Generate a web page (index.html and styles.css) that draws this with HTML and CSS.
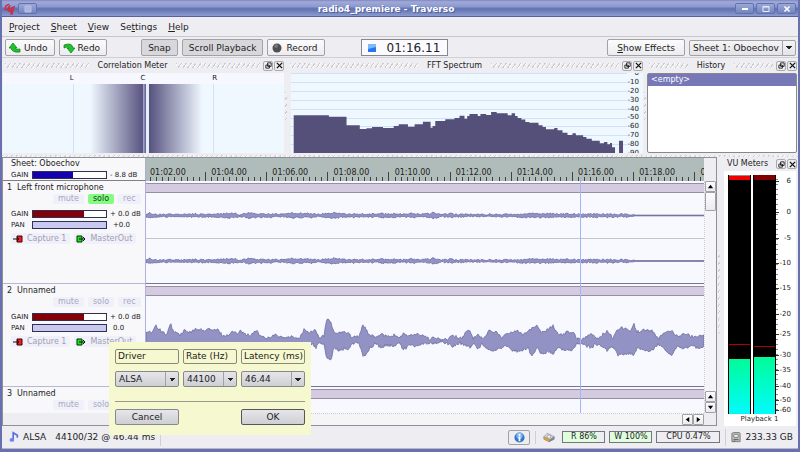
FILE: index.html
```html
<!DOCTYPE html>
<html lang="en">
<head>
<meta charset="UTF-8">
<meta name="viewport" content="width=device-width, initial-scale=1.0">
<title>radio4_premiere - Traverso</title>
<link rel="stylesheet" href="styles.css">
</head>
<body>

<header class="titlebar">
    <svg class="app-icon" viewBox="0 0 12 12"><path d="M5 1 2 3 1 6l2 1 2-3 1-2M5 6l5-2-2 7-1 0 1-4-3 1z" fill="none" stroke="#c8304c" stroke-width="1.500"/></svg>
    <button class="win-btn" aria-label="Window menu"><svg viewBox="0 0 8 8"><path d="M1 1h6v6h-6z" fill="#aab6de" stroke="#b8c2e4"/></svg></button>
    <h1>radio4_premiere - Traverso</h1>
    <button class="win-btn" aria-label="Minimize"><svg viewBox="0 0 8 8"><path d="M1 4h6" stroke="#fff" stroke-width="2"/></svg></button>
    <button class="win-btn" aria-label="Maximize"><svg viewBox="0 0 8 8"><path d="M1 1.500h6v5h-6zM1 2h6" fill="none" stroke="#e8ecfa"/></svg></button>
    <button class="win-btn" aria-label="Close"><svg viewBox="0 0 8 8"><path d="M1.500 1.500 6.500 6.500M6.500 1.500 1.500 6.500" stroke="#fff" stroke-width="1.600"/></svg></button>
</header>

<nav class="menubar">
    <button><u>P</u>roject</button>
    <button><u>S</u>heet</button>
    <button><u>V</u>iew</button>
    <button>Se<u>t</u>tings</button>
    <button><u>H</u>elp</button>
</nav>

<div class="toolbar">
    <button class="btn"><svg viewBox="0 0 12 12"><path d="M4 1 0 6h2q1 5 9 4V7q-4 1-5-1h2z" fill="#1fc42c" stroke="#0b7a16" stroke-width=".7"/></svg>Undo</button>
    <button class="btn"><svg viewBox="0 0 12 12"><path d="M8 11 12 6h-2Q9 0 1 3v3q4-2 5 0H4z" fill="#1fc42c" stroke="#0b7a16" stroke-width=".7"/></svg>Redo</button>
    <button class="btn pressed group">Snap</button>
    <button class="btn pressed">Scroll Playback</button>
    <button class="btn"><svg viewBox="0 0 12 12"><circle cx="6" cy="6" r="4.500" fill="#505050"/><circle cx="5" cy="4" r="2" fill="#777"/></svg>Record</button>
    <div class="clock"><svg viewBox="0 0 10 10"><path d="M1 1h8v8H1z" fill="#2477ec"/><path d="M1 1h8v3L1 6z" fill="#7db9ff"/></svg>01:16.11</div>
    <button class="btn effects"><span><u>S</u>how Effects</span></button>
    <span class="combo sheet-combo"><select aria-label="Sheet"><option>Sheet 1: Oboechov</option></select></span>
</div>

<div class="docks">
    <section class="dock correlation">
        <div class="dock-title"><i></i><h2>Correlation Meter</h2><i></i>
            <button aria-label="Float"><svg viewBox="0 0 8 8"><path d="M3 1h4v4H3zM1 3.500h4V7H1z" fill="#fff" stroke="#111"/></svg></button>
            <button aria-label="Close"><svg viewBox="0 0 8 8"><path d="M1 1l6 6M7 1 1 7" stroke="#111" stroke-width="1.500"/></svg></button>
        </div>
        <div class="corr-labels"><span>L</span><span>C</span><span>R</span></div>
        <div class="corr-plot"></div>
    </section>
    <div class="splitter"></div>
    <section class="dock fft">
        <div class="dock-title"><i></i><h2>FFT Spectrum</h2><i></i>
            <button aria-label="Float"><svg viewBox="0 0 8 8"><path d="M3 1h4v4H3zM1 3.500h4V7H1z" fill="#fff" stroke="#111"/></svg></button>
            <button aria-label="Close"><svg viewBox="0 0 8 8"><path d="M1 1l6 6M7 1 1 7" stroke="#111" stroke-width="1.500"/></svg></button>
        </div>
        <div class="fft-body">
            <svg id="fft" viewBox="291 73 337 80" preserveAspectRatio="none"></svg>
            <ol class="fft-scale"><li>0</li><li>-10</li><li>-20</li><li>-30</li><li>-40</li><li>-50</li><li>-60</li><li>-70</li><li>-80</li><li>-90</li></ol>
        </div>
    </section>
    <div class="splitter"></div>
    <section class="dock history">
        <div class="dock-title"><i></i><h2>History</h2><i></i>
            <button aria-label="Float"><svg viewBox="0 0 8 8"><path d="M3 1h4v4H3zM1 3.500h4V7H1z" fill="#fff" stroke="#111"/></svg></button>
            <button aria-label="Close"><svg viewBox="0 0 8 8"><path d="M1 1l6 6M7 1 1 7" stroke="#111" stroke-width="1.500"/></svg></button>
        </div>
        <ul class="history-list"><li>&lt;empty&gt;</li></ul>
    </section>
</div>

<main class="workspace">
    <section class="sheet">
        <div class="sheet-head">
            <h2>Sheet: Oboechov</h2>
            <div class="level"><label for="g0">GAIN</label><input type="range" id="g0" class="master" value="55" style="--level: 55%"><output>- 8.8 dB</output></div>
        </div>
        <div class="ruler">
            <svg id="ticks" viewBox="146 0 558 23" preserveAspectRatio="none"></svg>
            <div class="times"><span>01:02.00</span><span>01:04.00</span><span>01:06.00</span><span>01:08.00</span><span>01:10.00</span><span>01:12.00</span><span>01:14.00</span><span>01:16.00</span><span>01:18.00</span><span>01:20.00</span></div>
        </div>
        <div class="corner"></div>

        <div class="track-panels">
            <article class="track-panel">
                <h3><span>1</span>Left front microphone</h3>
                <div class="switches"><button>mute</button><button class="on">solo</button><button>rec</button></div>
                <div class="level"><label for="g1">GAIN</label><input type="range" id="g1" class="gain" value="70" style="--level: 70%"><output>+ 0.0 dB</output></div>
                <div class="level"><label for="p1">PAN</label><input type="range" id="p1" class="pan" style="--level: 100%"><output class="pan-value">+0.0</output></div>
                <div class="buses">
                    <button><svg viewBox="0 0 10 8"><path d="M4 1h5v6H4z" fill="#f02020" stroke="#400"/><path d="M0 4h6M4 2l2 2-2 2" fill="none" stroke="#111"/></svg>Capture 1</button>
                    <button><svg viewBox="0 0 10 8"><path d="M1 1h5v6H1z" fill="#18e818" stroke="#030"/><path d="M3 4h6M7 2l2 2-2 2" fill="none" stroke="#111"/></svg>MasterOut</button>
                </div>
            </article>
            <article class="track-panel">
                <h3><span>2</span>Unnamed</h3>
                <div class="switches"><button>mute</button><button>solo</button><button>rec</button></div>
                <div class="level"><label for="g2">GAIN</label><input type="range" id="g2" class="gain" value="70" style="--level: 70%"><output>+ 0.0 dB</output></div>
                <div class="level"><label for="p2">PAN</label><input type="range" id="p2" class="pan" style="--level: 100%"><output class="pan-value">0.0</output></div>
                <div class="buses">
                    <button><svg viewBox="0 0 10 8"><path d="M4 1h5v6H4z" fill="#f02020" stroke="#400"/><path d="M0 4h6M4 2l2 2-2 2" fill="none" stroke="#111"/></svg>Capture 1</button>
                    <button><svg viewBox="0 0 10 8"><path d="M1 1h5v6H1z" fill="#18e818" stroke="#030"/><path d="M3 4h6M7 2l2 2-2 2" fill="none" stroke="#111"/></svg>MasterOut</button>
                </div>
            </article>
            <article class="track-panel">
                <h3><span>3</span>Unnamed</h3>
                <div class="switches"><button>mute</button><button>solo</button><button>rec</button></div>
            </article>
        </div>
        <div class="clips">
            <div class="clip">
                <div class="clip-bar"></div>
                <svg id="wave1" viewBox="146 193 558 90" preserveAspectRatio="none"></svg>
            </div>
            <div class="clip">
                <div class="clip-bar"></div>
                <svg id="wave2" viewBox="146 296 558 90" preserveAspectRatio="none"></svg>
            </div>
            <div class="clip"><div class="clip-bar"></div></div>
            <div class="playhead"></div>
        </div>
        <div class="vscroll">
            <button aria-label="Scroll up"><svg viewBox="0 0 8 8"><path d="M1 6 4 2l3 4z"/></svg></button>
            <div class="thumb"></div>
            <button class="end" aria-label="Page up"><svg viewBox="0 0 8 8"><path d="M1 6 4 2l3 4z"/></svg></button>
            <button aria-label="Scroll down"><svg viewBox="0 0 8 8"><path d="M1 2 4 6l3-4z"/></svg></button>
        </div>
        <div class="corner"></div>
        <div class="hscroll">
            <button aria-label="Scroll left"><svg viewBox="0 0 8 8"><path d="M6 1 2 4l4 3z"/></svg></button>
            <button aria-label="Scroll right"><svg viewBox="0 0 8 8"><path d="M2 1 6 4 2 7z"/></svg></button>
        </div>
        <div class="corner"></div>
    </section>
    <div class="splitter"></div>
    <section class="dock vu">
        <div class="dock-title"><h2>VU Meters</h2>
            <button aria-label="Float"><svg viewBox="0 0 8 8"><path d="M3 1h4v4H3zM1 3.500h4V7H1z" fill="#fff" stroke="#111"/></svg></button>
            <button aria-label="Close"><svg viewBox="0 0 8 8"><path d="M1 1l6 6M7 1 1 7" stroke="#111" stroke-width="1.500"/></svg></button>
        </div>
        <div class="vu-body">
            <div class="bars">
                <div class="bar over" style="--level: 23%; --peak: 29%"></div>
                <div class="bar" style="--level: 24%; --peak: 28%"></div>
                <ol class="vu-scale">
                    <li style="flex-grow: 31">6</li><li style="flex-grow: 26">0</li><li style="flex-grow: 25">-5</li><li style="flex-grow: 25">-10</li><li style="flex-grow: 25">-15</li><li style="flex-grow: 20">-20</li><li style="flex-grow: 21">-25</li><li style="flex-grow: 15">-30</li><li style="flex-grow: 16">-35</li><li style="flex-grow: 14">-40</li><li style="flex-grow: 10">-50</li><li style="flex-grow: 4">-60</li>
                </ol>
            </div>
            <p>Playback 1</p>
        </div>
    </section>
</main>

<footer class="statusbar">
    <svg class="note" viewBox="0 0 12 14"><path d="M5 10V2l5 3v3" fill="none" stroke="#5a6ee0" stroke-width="2"/><ellipse cx="3.500" cy="10.500" rx="2.800" ry="2.200" fill="#6f82f0"/></svg>
    <span class="driver">ALSA</span>
    <span class="rate">44100/32 @ 46.44 ms</span>
    <button class="info" aria-label="Information"><svg viewBox="0 0 12 12"><circle cx="6" cy="6" r="5.500" fill="#2d74c8"/><circle cx="6" cy="4" r="3.500" fill="#82b4ec"/><path d="M6 2v2M6 5v5" stroke="#fff" stroke-width="2"/></svg></button>
    <svg class="cube" viewBox="0 0 14 14"><path d="M1 6 5 2l8 4-5 4z" fill="#d4d4dc" stroke="#a4a4ac"/><path d="M1 6v3l6 3 1-2z" fill="#e0a848" stroke="#b89050"/><path d="M8 10l5-4v3l-6 3z" fill="#7c8088" stroke="#888"/><circle cx="7" cy="6" r="2" fill="#fafafa" stroke="#99a"/></svg>
    <span class="stat" style="--fill: 86%">R 86%</span>
    <span class="stat" style="--fill: 100%">W 100%</span>
    <span class="stat cpu" style="--fill: 0%">CPU 0.47%</span>
    <span class="disk"><svg viewBox="0 0 12 14"><path d="M1 2 3 1h7l1 1v10H1z" fill="#b8b8b8" stroke="#777"/><ellipse cx="6" cy="5" rx="3" ry="2" fill="#eee" stroke="#777"/><path d="M3 9.500h6M3 11.500h2" stroke="#555"/></svg>233.33 GB</span>
</footer>

<form class="driver-popup">
    <label for="driver">Driver</label>
    <label for="rate">Rate (Hz)</label>
    <label for="latency">Latency (ms)</label>
    <span class="combo"><select id="driver"><option>ALSA</option></select></span>
    <span class="combo"><select id="rate"><option>44100</option></select></span>
    <span class="combo"><select id="latency"><option>46.44</option></select></span>
    <hr>
    <button type="button" class="btn cancel">Cancel</button>
    <button type="button" class="btn ok">OK</button>
</form>

<script src="script.js"></script>
</body>
</html>
```
FILE: styles.css
```css
* {
    box-sizing: border-box;
}

body {
    display: flex;
    flex-direction: column;
    min-height: 100vh;
    margin: 0;
    border: 2px solid #6870b0;
    border-top: 0;
    border-bottom-width: 3px;
    background: #eeeef2;
    color: #222;
    font: 9px/12px "DejaVu Sans", sans-serif;
    position: relative;
}

h1, h2, h3, p, ul, ol {
    margin: 0;
    padding: 0;
    list-style: none;
    font-size: 8px;
    font-weight: normal;
}

button, select {
    margin: 0;
    padding: 0;
    border: 0;
    background: none;
    color: inherit;
    font: inherit;
}

svg {
    display: block;
}

/* title bar */
.titlebar {
    display: flex;
    align-items: center;
    gap: 2px;
    height: 17px;
    margin: 0 -2px;
    padding: 1px 4px 0;
    border-bottom: 1px solid #5a5f9e;
    background: linear-gradient(#8088c0, #a0aad8 12%, #8c9ad0 40%, #6272b0 55%, #7080bc 72%, #8c9cd0);
}

.titlebar h1 {
    flex: 1;
    color: #fff;
    font-size: 9px;
    font-weight: bold;
    text-align: center;
    text-shadow: 1px 1px #5060a0;
}

.app-icon {
    width: 12px;
    height: 12px;
}

.win-btn {
    display: grid;
    place-items: center;
    width: 19px;
    height: 11px;
    border: 1px solid #6272ae;
    border-radius: 2px;
    background: linear-gradient(#9aa8d8, #7484c0);
}

.win-btn svg {
    width: 8px;
    height: 8px;
}

/* menu and toolbar */
.menubar {
    display: flex;
    gap: 11px;
    height: 20px;
    padding: 0 7px;
    border-bottom: 1px solid #c8c8cc;
}

.toolbar {
    display: flex;
    align-items: center;
    gap: 4px;
    height: 21px;
    padding: 2px 2px 1px 3px;
    border-bottom: 1px solid #d0d0d4;
}

.btn {
    display: flex;
    align-items: center;
    justify-content: center;
    gap: 3px;
    height: 17px;
    padding: 0 6px;
    border: 1px solid #a2a2a6;
    border-radius: 2px;
    background: linear-gradient(#fcfcfc, #ececf0);
}

.btn svg {
    width: 12px;
    height: 12px;
    margin-left: -3px;
}

.pressed {
    background: #d8d8dc;
}

.group {
    margin-left: 30px;
}

.clock {
    display: flex;
    align-items: center;
    gap: 10px;
    height: 17px;
    margin-left: 32px;
    padding: 0 7px 0 5px;
    border: 1px solid #88888c;
    background: #fbfbff;
    font-size: 12px;
}

.clock svg {
    width: 10px;
    height: 10px;
}

.effects {
    margin-left: auto;
    padding: 0 9px;
}

.combo {
    display: flex;
    height: 16px;
    border: 1px solid #a2a2a6;
    border-radius: 2px;
    background: linear-gradient(#f4f4f6, #e4e4e8);
    position: relative;
}

.combo select {
    flex: 1;
    min-width: 0;
    padding: 0 12px 0 3px;
    appearance: none;
}

.combo::after {
    content: "";
    width: 12px;
    border-left: 1px solid #a2a2a6;
    background: conic-gradient(from -45deg at 50% 100%, #222 90deg, transparent 0) center / 6px 3px no-repeat;
    position: absolute;
    top: 0;
    right: 0;
    bottom: 0;
    pointer-events: none;
}

.sheet-combo {
    width: 107px;
}

/* docks */
.docks {
    display: flex;
    height: 99px;
    padding: 0 1px 4px 1px;
    background: repeating-linear-gradient(125deg, #d0d0d4 0 1px, #f8f8fa 1px 2px, #eeeef2 2px 4px) 50% 97px / 100% 2px no-repeat;
}

.dock {
    display: flex;
    flex-direction: column;
    min-width: 0;
}

.correlation {
    flex: 281;
}

.fft {
    flex: 355;
}

.history {
    flex: 150;
}

.dock-title {
    display: flex;
    align-items: center;
    gap: 1px;
    height: 15px;
}

.dock-title i {
    flex: 1;
    height: 5px;
    margin: 0 2px;
    background: repeating-linear-gradient(125deg, #ccccd0 0 1px, #f8f8fa 1px 2px, transparent 2px 4px);
}

.dock-title h2 {
    margin: 0 6px;
}

.dock-title button {
    display: grid;
    place-items: center;
    width: 10px;
    height: 10px;
    border: 1px solid #aaaaae;
    border-radius: 2px;
}

.dock-title svg {
    width: 7px;
    height: 7px;
}

.splitter {
    flex: 0 0 4px;
    background: repeating-linear-gradient(125deg, #ccccd0 0 1px, #f8f8fa 1px 2px, #eeeef2 2px 4px) center / 2px 28px no-repeat;
}

.workspace .splitter {
    background-size: 2px 84px;
}

.corr-labels {
    display: flex;
    justify-content: space-evenly;
    height: 11px;
    background: #f7f7ff;
    font-size: 7px;
    line-height: 10px;
}

.corr-plot {
    flex: 1;
    background:
        linear-gradient(#cfe2fa, #cfe2fa) 25% 0 / 1px 100% no-repeat,
        linear-gradient(#cfe2fa, #cfe2fa) 75% 0 / 1px 100% no-repeat,
        linear-gradient(90deg, transparent 31%, #56527f 50%, #a0a0cc 50%, #56527f 51%, #e4f0fc 51%, #e4f0fc 52%, #56527f 52%, transparent 71%),
        #f0f8ff;
}

.fft-body {
    display: flex;
    flex: 1;
    min-height: 0;
    padding-left: 3px;
    overflow: hidden;
}

.fft-body svg {
    flex: 1;
    min-width: 0;
    height: 100%;
    background: #f0f8ff;
}

.fft-scale {
    display: flex;
    flex-direction: column;
    justify-content: space-between;
    width: 16px;
    margin: -4px 0;
    padding-right: 4px;
    background: #f0f8ff;
    font-size: 7px;
    line-height: 8px;
}

.fft-scale li {
    display: flex;
    justify-content: flex-end;
}

.history-list {
    flex: 1;
    border: 1px solid #88888c;
    border-radius: 2px;
    background: #fff;
}

.history-list li {
    padding-left: 3px;
    background: #7678b8;
    color: #fff;
    line-height: 12px;
}

/* sheet */
.workspace {
    display: flex;
    flex: 1;
}

.sheet {
    display: grid;
    grid-template-columns: 143px 1fr 12px;
    grid-template-rows: 23px 1fr 12px;
    flex: 1;
    min-width: 0;
    border: 1px solid #909094;
    background: #f8f8fa;
}

.sheet-head {
    border-right: 1px solid #a8aed0;
    border-bottom: 1px solid #808084;
    padding-left: 8px;
}

.sheet-head h2 {
    line-height: 11px;
}

.level {
    display: grid;
    grid-template-columns: 18px 75px 1fr;
    align-items: center;
    gap: 3px;
    height: 11px;
    font-size: 7px;
    line-height: 8px;
    white-space: nowrap;
}

.level input {
    width: 75px;
    height: 8px;
    margin: 0;
    appearance: none;
    border: 1px solid #303050;
    background: linear-gradient(var(--fill), var(--fill)) 0 0 / var(--level) 100% no-repeat #fff;
}

.level input::-webkit-slider-thumb {
    appearance: none;
    width: 1px;
    height: 6px;
}

.level .master {
    --fill: #1400ac;
}

.level .gain {
    --fill: #840008;
}

.level .pan {
    --fill: #c8c8f0;
}

.level .pan-value {
    padding-left: 3px;
}

.ruler {
    display: grid;
    background: #b0bcb9;
    overflow: hidden;
}

.ruler svg,
.times {
    grid-area: 1 / 1;
    width: 100%;
    height: 23px;
}

.times {
    display: flex;
    min-width: 0;
    padding-top: 9px;
    font-size: 8px;
}

.times span {
    flex: 0 0 10.96%;
    padding-left: 4px;
}

.track-panels,
.clips {
    height: 0;
    min-height: 100%;
    overflow: hidden;
}

.track-panels {
    border-right: 1px solid #b0b0dc;
}

.track-panel {
    height: 103px;
    padding-left: 8px;
    border-bottom: 1px solid #b8b8d4;
}

.track-panel h3 {
    margin-left: -4px;
    line-height: 13px;
}

.track-panel h3 span {
    display: inline-block;
    width: 10px;
}

.switches {
    display: flex;
    gap: 4px;
    margin: 0 6px 4px 42px;
    color: #a8a8bc;
    font-size: 8px;
    line-height: 10px;
}

.switches button {
    padding: 0 5px;
    border-radius: 2px;
    background: #f0f0fa;
}

.switches .on {
    background: #84fc84;
    color: #183c18;
}

.buses {
    display: flex;
    gap: 4px;
    margin-top: 3px;
    color: #a0a0b0;
    font-size: 8px;
    line-height: 11px;
}

.buses button {
    display: flex;
    align-items: center;
    gap: 4px;
    padding: 0 4px 0 2px;
    background: #f0f0fa;
    border-radius: 2px;
}

.buses svg {
    width: 10px;
    height: 8px;
}

.clips {
    background: #f8f8ff;
    position: relative;
}

.clip {
    height: 103px;
    padding-top: 2px;
    border-bottom: 1px solid #75759a;
}

.clip-bar {
    height: 10px;
    border: solid #96909e;
    border-width: 1px 0;
    background: #d4cbe2;
}

.clip svg {
    width: 100%;
    height: 90px;
}

.playhead {
    width: 1px;
    background: #a4b4fc;
    position: absolute;
    top: 0;
    bottom: 0;
    left: 77.8%;
}

.vscroll,
.hscroll {
    display: flex;
    background: #f5f5f7;
}

.vscroll {
    flex-direction: column;
    border-left: 1px dotted #d0d0d4;
}

.hscroll {
    justify-content: flex-end;
    border-top: 1px dotted #d0d0d4;
}

.vscroll button,
.hscroll button,
.thumb {
    display: grid;
    place-items: center;
    width: 11px;
    height: 11px;
    border: 1px solid #a2a2a6;
    border-radius: 1px;
    background: linear-gradient(#fcfcfc, #ececf0);
}

.thumb {
    height: 19px;
}

.vscroll .end {
    margin-top: auto;
}

.vscroll svg,
.hscroll svg {
    width: 7px;
    height: 7px;
}

.corner {
    background: #eeeef2;
}

/* vu meters */
.vu {
    flex: 0 0 77px;
}

.vu .dock-title {
    height: 14px;
    padding-right: 1px;
}

.vu h2 {
    flex: 1;
    white-space: nowrap;
}

.vu-body {
    display: flex;
    flex-direction: column;
    flex: 1;
    margin: 0 2px 0 3px;
    padding: 4px 5px 1px 4px;
    background: #fff;
}

.vu-body p {
    font-size: 7px;
    line-height: 11px;
    text-align: center;
}

.bars {
    display: flex;
    flex: 1;
    gap: 2px;
}

.bar {
    width: 23px;
    border: solid #000;
    border-width: 0 1px;
    background:
        linear-gradient(#800000, #800000) 0 0 / 100% 5px no-repeat,
        linear-gradient(to top, transparent var(--peak), #b00000 0, #b00000 calc(var(--peak) + 1px), transparent 0),
        linear-gradient(#00fc98, #00fcfc) 0 100% / 100% var(--level) no-repeat,
        #000;
}

.over {
    background:
        linear-gradient(#909090 1px, #f00000 1px) 0 0 / 100% 5px no-repeat,
        linear-gradient(to top, transparent var(--peak), #b00000 0, #b00000 calc(var(--peak) + 1px), transparent 0),
        linear-gradient(#00fc98, #00fcfc) 0 100% / 100% var(--level) no-repeat,
        #000;
}

.vu-scale {
    display: flex;
    flex-direction: column;
    flex: 1;
    margin-left: -2px;
    padding-top: 6px;
    background: repeating-linear-gradient(transparent 0 4px, #88888c 4px 5px) 0 0 / 2px 100% no-repeat;
}

.vu-scale li {
    display: flex;
    flex: 1 1 0;
    justify-content: space-between;
    font-size: 7px;
    line-height: 0;
}

.vu-scale li::before {
    content: "";
    width: 3px;
    height: 1px;
    background: #333;
}

/* status bar */
.statusbar {
    display: flex;
    align-items: center;
    height: 23px;
    padding: 0 5px 0 7px;
    border-bottom: 1px solid #b8b8c4;
}

.note {
    width: 10px;
    height: 12px;
    margin-right: 4px;
}

.rate {
    margin: 0 auto 0 9px;
    padding-right: 5px;
    border-right: 1px solid #d0d0d4;
    line-height: 17px;
}

.info {
    display: grid;
    place-items: center;
    width: 22px;
    height: 15px;
    margin-right: 5px;
    border: 1px solid #a2a2a6;
    border-radius: 2px;
}

.info svg {
    width: 11px;
    height: 11px;
}

.cube {
    width: 20px;
    height: 13px;
    margin-right: 7px;
    padding-left: 7px;
    border-left: 1px solid #d0d0d4;
}

.stat {
    width: 43px;
    margin-right: 4px;
    border: 1px solid #77777b;
    background: linear-gradient(90deg, #dffedf var(--fill), #eeeef2 var(--fill));
    font-size: 8px;
    line-height: 10px;
    text-align: center;
}

.cpu {
    width: 64px;
}

.disk {
    display: flex;
    gap: 4px;
    margin-left: 1px;
    padding-left: 5px;
    border-left: 1px solid #d0d0d4;
    line-height: 17px;
}

.disk svg {
    width: 10px;
    height: 13px;
    margin-top: 2px;
}

/* driver popup, floats above the status bar */
.driver-popup {
    display: grid;
    grid-template-columns: 64px 54px 64px;
    gap: 7px 4px;
    padding: 7px 6px 10px;
    background: #f6f8cf;
    position: absolute;
    left: 107px;
    bottom: 14px;
}

.driver-popup label {
    height: 15px;
    padding-left: 2px;
    border: 1px solid #88887c;
    border-radius: 2px;
    line-height: 13px;
    white-space: nowrap;
}

.driver-popup .combo,
.driver-popup .btn {
    border-color: #88888c;
    background: linear-gradient(#e6e6ea, #cecfd4);
}

.driver-popup hr {
    grid-column: 1 / -1;
    width: 100%;
    margin: 7px 0 0;
    border: 0;
    border-top: 1px solid #99998c;
}

.driver-popup .btn {
    height: 16px;
}

.driver-popup .ok {
    grid-column: 3;
    border-color: #55555a;
}
```
FILE: script.js
```js
// ruler ticks, one major tick every ten
var d = "";
for (var i = 0; i < 92; i++) {
    var tx = Math.round(150 + i * 6.115) + 0.5;
    d += "M" + tx + " " + (i % 10 == 9 ? 14 : 19) + "V23";
}
document.getElementById("ticks").innerHTML = '<path d="' + d + '" stroke="#3c4444"/>';

// spectrum: [right edge, top]
var bins = [[329,115.3],[346.7,116.7],[360,125.3],[366.7,129],[372.3,128.3],[383.3,127],[394,128],[399,126],[408.3,124.3],[415,126.7],[423.3,124.3],[431,121.7],[433,127.7],[435.7,126],[445.7,121],[455,119.3],[460,118],[465,115.7],[467.7,118.7],[470,116],[478.3,114],[481,116],[486.7,114],[491.7,115],[497.3,112],[508.3,113.3],[512.3,115.3],[515.7,113.3],[518.3,116],[522,118],[526,119.5],[530,122],[539.3,122.7],[543.3,125.3],[546.7,127],[555,129.3],[558.3,128],[563.3,130.3],[568.3,132.7],[573.3,135],[576.7,133.3],[584,135.3],[587.3,137],[592.7,138.7],[600.7,140.7],[605,143.3],[608.3,142],[611,144.3],[613,143],[616,147.3],[620,153],[624,140.7]];
var grid = "", shape = "M293.700 153";
for (i = 0; i < 9; i++) {
    grid += "M291 " + (Math.round(73 + i * 8.9) + 0.5) + "H628";
}
bins.forEach(function(b) {
    shape += "V" + b[1] + "H" + b[0];
});
document.getElementById("fft").innerHTML = '<path d="' + grid + '" stroke="#cfe2fa"/><path d="' + shape + 'V153z" fill="#545079"/>';

// value of a list of [x, amplitude] points at x
function at(points, x) {
    for (var k = 1; k < points.length; k++) {
        if (x <= points[k][0]) {
            var a = points[k - 1], b = points[k];
            return a[1] + (b[1] - a[1]) * (x - a[0]) / (b[0] - a[0]);
        }
    }
    return points[points.length - 1][1];
}

function noise(x) {
    var n = Math.sin(x * 127.1) * 43758.5453;
    return n - Math.floor(n) - 0.5;
}

function wave(center, up, down, rough) {
    var top = "M146 " + center, bottom = "";
    for (var x = 146; x <= 704; x++) {
        var r = x > 634 && rough < 2 ? 0 : rough;
        top += "L" + x + " " + (center - Math.max(0.4, at(up, x) + noise(x) * r)).toFixed(1);
        bottom = "L" + x + " " + (center + Math.max(0.4, at(down, x) + noise(x + 900) * r)).toFixed(1) + bottom;
    }
    return '<path d="' + top + bottom + 'z" fill="#9292c4" stroke="#66669a" stroke-width=".7"/>';
}

var thin = [[146,1.2],[150,2],[160,1],[185,1],[195,1.4],[215,1],[227,2.3],[234,2],[240,1],[250,2.6],[256,1.5],[270,1.6],[280,1],[293,2.3],[310,1.8],[320,1],[335,2.8],[341,1.5],[355,1.6],[365,1],[380,1.6],[395,1.8],[402,1],[412,2],[420,1],[434,2.4],[443,1],[450,1.7],[455,1],[462,1.5],[469,1],[481,1],[510,1],[530,2],[560,1.7],[580,1.4],[600,1.5],[620,1.3],[632,1],[634,0.4],[704,0.4]];
document.getElementById("wave1").innerHTML = '<path d="M146 238.500H704" stroke="#c4c4cc"/>' + wave(215.5, thin, thin, 1.8) + wave(261, thin, thin, 1.8);

var up = [[146,9],[151,8],[155.7,16],[160,11],[166.7,6],[170.7,17],[173.3,10],[180,6],[185,11],[188.3,8],[193,10],[198,12.7],[203,10],[208,12],[213,10.7],[218,11],[223,5],[228,6],[233,9.7],[237,7],[240,12],[243,8],[250,5],[257.3,11],[260,5],[267,3],[275,6],[283,3],[293,4],[300,3],[304,12],[308,8],[313,10],[315.7,11],[319,3],[324,5],[326.7,22],[330.7,20],[334,8],[340,8],[348,9],[351.7,4],[359,5],[362.7,15],[365,14],[369,6],[375,4],[382,6],[390,5],[395,6],[400,3],[403,7],[410,5],[416,7],[423,5],[430,2],[437,3],[443,1],[448,2],[453,5],[462,3],[466,9],[469,11],[473,3],[478,6],[483,2],[488,10],[496,9],[502,4],[508,7],[517,11],[523,7],[528,10],[533,13],[537,15.5],[541.7,9],[547,11],[553,15],[557,9],[562,6],[567,9],[573,9],[577,3],[582,1.5],[585,4],[592,7],[597,2],[602,6],[607,10],[613,3],[617,12],[622,13],[630,11],[634,16.5],[637,9],[643,11],[652,10],[658,2],[663,7],[670,11],[677,5],[687,7],[693,4],[700,6],[704,5]];
var down = [[146,7],[180,8],[220,6],[260,4],[300,4],[311.7,2],[315.7,7],[319,2],[324,3],[326.7,17],[330.7,19],[334,7],[340,10],[345,7],[348,9],[353,2],[359,2],[362.7,14],[365,14.5],[370,7],[375,3],[380,6],[387,4],[393,5],[400,2],[403,9],[410,4],[417,5],[423,3],[437,1.5],[443,1],[453,5],[460,2],[466,5],[471,7],[473,2],[478,8],[482,3],[488,9],[493,10],[502,6],[507,4],[512,10],[518,10],[528,7],[531.7,16],[537,7],[543,14],[548,10],[553,13],[558,7],[563,9],[572,9],[577,3],[582,2],[587,5],[592,7],[595,2],[602,6],[607,9],[613,5],[618,14],[622,14],[627,12],[634,14],[638,5],[643,10],[652,9],[658,3],[665,9],[671,15],[677,5],[683,8],[690,5],[697,7],[704,5]];
document.getElementById("wave2").innerHTML = wave(341, up, down, 3);
```
